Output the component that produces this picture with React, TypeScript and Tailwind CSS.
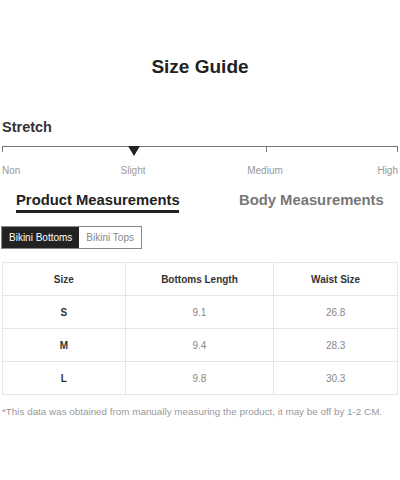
import React from "react";

const rows = [
  ["S", "9.1", "26.8"],
  ["M", "9.4", "28.3"],
  ["L", "9.8", "30.3"],
];

export default function App() {
  return (
    <div className="w-[400px] h-[480px] bg-white text-[#222] overflow-hidden" style={{ fontFamily: '"Liberation Sans", Arial, sans-serif' }}>
      <div className="pt-[55px] text-center text-[19px] font-bold leading-[24px]">Size Guide</div>
      <div className="mt-[39px] px-[2px] text-[14.5px] font-bold leading-[18px] text-[#333]">Stretch</div>
      <div className="relative mx-[2px] mt-[10px] h-[6px] border-t border-x border-[#777]">
        <div className="absolute left-[263px] top-0 h-[5px] w-px bg-[#777]" />
        <div className="absolute left-[125px] -top-[1px] h-0 w-0 border-l-[6px] border-r-[6px] border-t-[10px] border-l-transparent border-r-transparent border-t-[#222]" />
      </div>
      <div className="relative mx-[2px] mt-[12px] h-[14px] text-[10px] leading-[14px] text-[#999]">
        <span className="absolute left-0">Non</span>
        <span className="absolute left-[131px] -translate-x-1/2">Slight</span>
        <span className="absolute left-[263px] -translate-x-1/2">Medium</span>
        <span className="absolute right-0">High</span>
      </div>
      <div className="mt-[13px] flex items-start">
        <div className="ml-[16px] w-[163px] whitespace-nowrap border-b-[3px] border-[#222] pb-[1px] text-[14.8px] font-bold leading-[18px] text-[#222]">Product Measurements</div>
        <div className="ml-[60px] whitespace-nowrap text-[14.8px] font-bold leading-[18px] text-[#777]">Body Measurements</div>
      </div>
      <div className="mt-[13px] ml-[1px] flex h-[23px] w-fit border border-[#888] text-[10px]">
        <div className="flex items-center bg-[#222] px-[7px] text-white">Bikini Bottoms</div>
        <div className="flex items-center bg-white px-[7px] text-[#888]">Bikini Tops</div>
      </div>
      <table className="mx-[2px] mt-[13px] w-[396px] border-collapse text-[10px]">
        <colgroup>
          <col className="w-[123px]" />
          <col className="w-[149px]" />
          <col className="w-[124px]" />
        </colgroup>
        <thead>
          <tr className="h-[33px]">
            <th className="border border-[#e5e5e5] font-bold text-[#333]">Size</th>
            <th className="border border-[#e5e5e5] font-bold text-[#333]">Bottoms Length</th>
            <th className="border border-[#e5e5e5] font-bold text-[#333]">Waist Size</th>
          </tr>
        </thead>
        <tbody>
          {rows.map((r) => (
            <tr key={r[0]} className="h-[33px] text-center">
              <td className="border border-[#e5e5e5] font-bold text-[#333]">{r[0]}</td>
              <td className="border border-[#e5e5e5] text-[#888]">{r[1]}</td>
              <td className="border border-[#e5e5e5] text-[#888]">{r[2]}</td>
            </tr>
          ))}
        </tbody>
      </table>
      <div className="mt-[10px] pl-[2px] text-[9.85px] leading-[14px] text-[#999] whitespace-nowrap">*This data was obtained from manually measuring the product, it may be off by 1-2 CM.</div>
    </div>
  );
}
